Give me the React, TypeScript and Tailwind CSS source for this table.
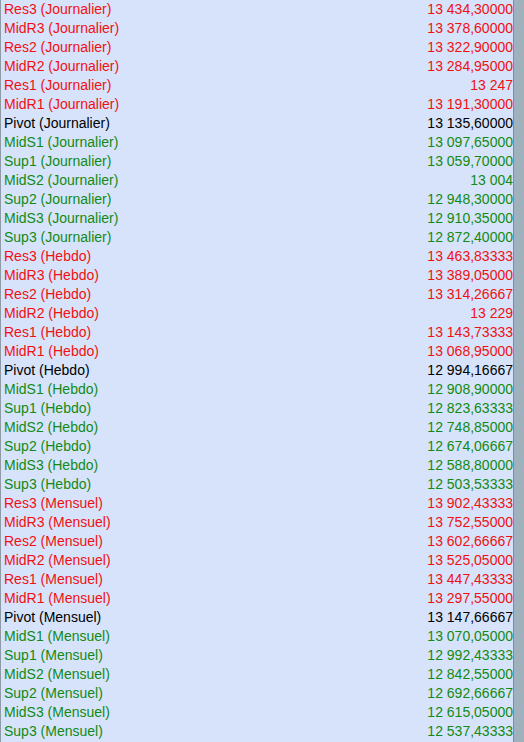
import React from "react";

type Row = [string, string, "r" | "k" | "g"];

const rows: Row[] = [
  ["Res3 (Journalier)", "13 434,30000", "r"],
  ["MidR3 (Journalier)", "13 378,60000", "r"],
  ["Res2 (Journalier)", "13 322,90000", "r"],
  ["MidR2 (Journalier)", "13 284,95000", "r"],
  ["Res1 (Journalier)", "13 247", "r"],
  ["MidR1 (Journalier)", "13 191,30000", "r"],
  ["Pivot (Journalier)", "13 135,60000", "k"],
  ["MidS1 (Journalier)", "13 097,65000", "g"],
  ["Sup1 (Journalier)", "13 059,70000", "g"],
  ["MidS2 (Journalier)", "13 004", "g"],
  ["Sup2 (Journalier)", "12 948,30000", "g"],
  ["MidS3 (Journalier)", "12 910,35000", "g"],
  ["Sup3 (Journalier)", "12 872,40000", "g"],
  ["Res3 (Hebdo)", "13 463,83333", "r"],
  ["MidR3 (Hebdo)", "13 389,05000", "r"],
  ["Res2 (Hebdo)", "13 314,26667", "r"],
  ["MidR2 (Hebdo)", "13 229", "r"],
  ["Res1 (Hebdo)", "13 143,73333", "r"],
  ["MidR1 (Hebdo)", "13 068,95000", "r"],
  ["Pivot (Hebdo)", "12 994,16667", "k"],
  ["MidS1 (Hebdo)", "12 908,90000", "g"],
  ["Sup1 (Hebdo)", "12 823,63333", "g"],
  ["MidS2 (Hebdo)", "12 748,85000", "g"],
  ["Sup2 (Hebdo)", "12 674,06667", "g"],
  ["MidS3 (Hebdo)", "12 588,80000", "g"],
  ["Sup3 (Hebdo)", "12 503,53333", "g"],
  ["Res3 (Mensuel)", "13 902,43333", "r"],
  ["MidR3 (Mensuel)", "13 752,55000", "r"],
  ["Res2 (Mensuel)", "13 602,66667", "r"],
  ["MidR2 (Mensuel)", "13 525,05000", "r"],
  ["Res1 (Mensuel)", "13 447,43333", "r"],
  ["MidR1 (Mensuel)", "13 297,55000", "r"],
  ["Pivot (Mensuel)", "13 147,66667", "k"],
  ["MidS1 (Mensuel)", "13 070,05000", "g"],
  ["Sup1 (Mensuel)", "12 992,43333", "g"],
  ["MidS2 (Mensuel)", "12 842,55000", "g"],
  ["Sup2 (Mensuel)", "12 692,66667", "g"],
  ["MidS3 (Mensuel)", "12 615,05000", "g"],
  ["Sup3 (Mensuel)", "12 537,43333", "g"],
];

const colorClass = {
  r: "text-[#f21010]",
  k: "text-black",
  g: "text-[#138a13]",
};

export default function App() {
  return (
    <div className="flex h-[742px] w-[524px] overflow-hidden bg-[#9fb1bd] font-['Liberation_Sans',Arial,sans-serif] text-[14px]">
      <div className="flex w-[514px] flex-col border-l border-r border-l-[#8e9aa6] border-r-[#7f8c97] bg-[#d6e3fb]">
        {rows.map(([label, value, c], i) => (
          <div
            key={i}
            className={`flex h-[19px] shrink-0 items-center justify-between pl-[3px] leading-[19px] ${colorClass[c]}`}
          >
            <span>{label}</span>
            <span>{value}</span>
          </div>
        ))}
      </div>
    </div>
  );
}
